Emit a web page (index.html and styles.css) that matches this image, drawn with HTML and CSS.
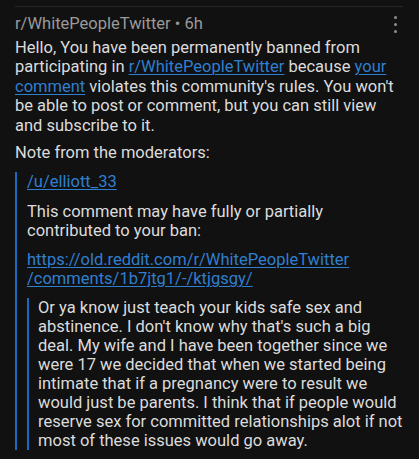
FILE: index.html
```html
<!DOCTYPE html>
<html>
<head>
<meta charset="utf-8">
<link rel="stylesheet" href="styles.css">
</head>
<body>
<div class="screen">
  <div class="divider"></div>
  <div class="header">
    <span class="meta">r/WhitePeopleTwitter • 6h</span>
    <span class="more"><i></i><i></i><i></i></span>
  </div>
  <div class="body">
    <p>Hello, You have been permanently banned from participating in <a href="#">r/WhitePeopleTwitter</a> because <a href="#">your comment</a> violates this community's rules. You won't be able to post or comment, but you can still view and subscribe to it.</p>
    <p>Note from the moderators:</p>
    <blockquote class="quote">
      <p class="user"><a href="#">/u/elliott_33</a></p>
      <p>This comment may have fully or partially contributed to your ban:</p>
      <p class="url"><a href="#">https://old.reddit.com/r/WhitePeopleTwitter<br>/comments/1b7jtg1/-/ktjgsgy/</a></p>
      <blockquote class="quote inner">
        <p>Or ya know just teach your kids safe sex and abstinence. I don't know why that's such a big deal. My wife and I have been together since we were 17 we decided that when we started being intimate that if a pregnancy were to result we would just be parents. I think that if people would reserve sex for committed relationships alot if not most of these issues would go away.</p>
      </blockquote>
    </blockquote>
  </div>
</div>
</body>
</html>
```

FILE: styles.css
```css
html, body {
  margin: 0;
  padding: 0;
  background: #111111;
}
body {
  font-family: Roboto, "Noto Sans", sans-serif;
  color: #dcdcdc;
  width: 419px;
  height: 459px;
  overflow: hidden;
}
.screen {
  padding: 6px 12px 0 15px;
}
.divider {
  height: 1px;
  background: #262626;
  margin-right: 4px;
}
.header {
  display: flex;
  justify-content: space-between;
  align-items: center;
  margin-top: 7px;
  height: 18px;
}
.meta {
  font-size: 16.5px;
  color: #9a9a9a;
}
.more {
  display: flex;
  flex-direction: column;
  gap: 4px;
  margin-right: 10px;
  margin-top: 2px;
}
.more i {
  display: block;
  width: 3px;
  height: 3px;
  border-radius: 50%;
  background: #8e8e8e;
}
.body {
  font-size: 16.5px;
  line-height: 19.4px;
  margin-top: 6px;
}
.body p {
  margin: 0 0 8px 0;
}
a {
  color: #2f7fd0;
  text-decoration: underline;
  text-decoration-thickness: 1px;
  text-underline-offset: 2px;
}
.quote {
  margin: 0;
  border-left: 2px solid #1a6bc0;
  padding-left: 10px;
}
.quote > p {
  margin: 0 0 9px 0;
}
.quote .user {
  margin-top: 10px;
  margin-bottom: 10px;
}
.inner {
  margin-top: 10px;
  padding-left: 9px;
}
.inner p {
  margin: 0;
  line-height: 19px;
}
```
